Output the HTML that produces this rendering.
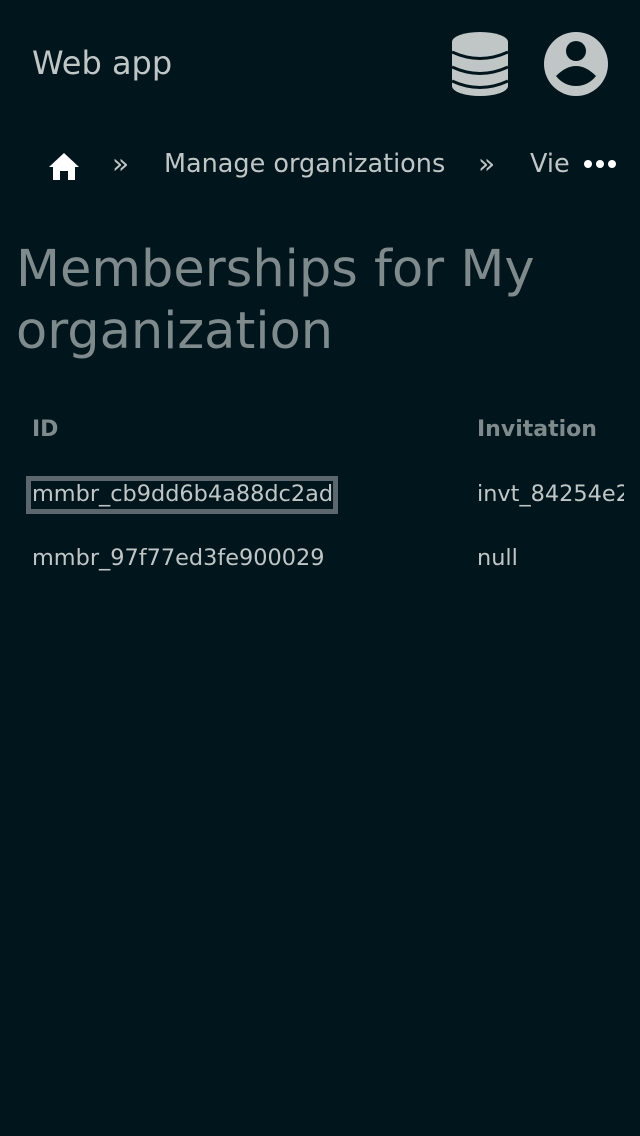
<!DOCTYPE html>
<html><head><style>
body{margin:0;width:640px;height:1136px;background:#01151c;font-family:"DejaVu Sans","Liberation Sans",sans-serif;color:#c0c6c6;overflow:hidden;position:relative}
.a{position:absolute;white-space:nowrap}
</style></head><body>
<div class="a" style="left:32px;top:43px;font-size:32px;line-height:40px">Web app</div>
<svg class="a" style="left:452px;top:32px" width="56" height="64" viewBox="0 0 56 64">
<ellipse cx="28" cy="10" rx="28" ry="10" fill="#c0c6c6"/>
<rect x="0" y="10" width="56" height="44" fill="#c0c6c6"/>
<ellipse cx="28" cy="54" rx="28" ry="10" fill="#c0c6c6"/>
<path d="M0 20 Q28 33 56 20 M0 35 Q28 48 56 35 M0 49 Q28 62 56 49" stroke="#01151c" stroke-width="3" fill="none"/>
</svg>
<svg class="a" style="left:544px;top:32px" width="64" height="64" viewBox="0 0 64 64">
<circle cx="32" cy="32" r="32" fill="#c0c6c6"/>
<circle cx="32" cy="19" r="10" fill="#01151c"/>
<path d="M12 44 Q32 24 52 44 Q44 54 32 54 Q20 54 12 44Z" fill="#01151c"/>
</svg>
<svg class="a" style="left:48px;top:152px" width="32" height="28" viewBox="0 0 32 28">
<path d="M16 1 L31 15 L27 15 L27 28 L20 28 L20 19 L12 19 L12 28 L5 28 L5 15 L1 15Z" fill="#fff"/>
</svg>
<div class="a" style="left:112px;top:148px;font-size:28px;line-height:32px">»</div>
<div class="a" style="left:164px;top:148px;font-size:25.5px;line-height:32px">Manage organizations</div>
<div class="a" style="left:478px;top:148px;font-size:28px;line-height:32px">»</div>
<div class="a" style="left:530px;top:148px;font-size:25.5px;line-height:32px">Vie</div>
<svg class="a" style="left:583px;top:159px" width="34" height="10"><circle cx="5" cy="5" r="4" fill="#fff"/><circle cx="17" cy="5" r="4" fill="#fff"/><circle cx="29" cy="5" r="4" fill="#fff"/></svg>
<div class="a" style="left:16px;top:239px;font-size:51px;line-height:62px;color:#7f8a8c;white-space:normal;width:600px">Memberships for My organization</div>
<div class="a" style="left:32px;top:417px;font-size:22px;font-weight:bold;color:#7f8a8c">ID</div>
<div class="a" style="left:477px;top:417px;font-size:22px;font-weight:bold;color:#7f8a8c">Invitation</div>
<div class="a" style="left:26px;top:476px;width:302px;height:28px;border:5px solid #5c676d"></div>
<div class="a" style="left:32px;top:481px;font-size:22.4px">mmbr_cb9dd6b4a88dc2ad</div>
<div class="a" style="left:477px;top:481px;font-size:22.4px;width:147px;overflow:hidden">invt_84254e2c</div>
<div class="a" style="left:32px;top:545px;font-size:22.4px">mmbr_97f77ed3fe900029</div>
<div class="a" style="left:477px;top:545px;font-size:22.4px">null</div>
</body></html>
